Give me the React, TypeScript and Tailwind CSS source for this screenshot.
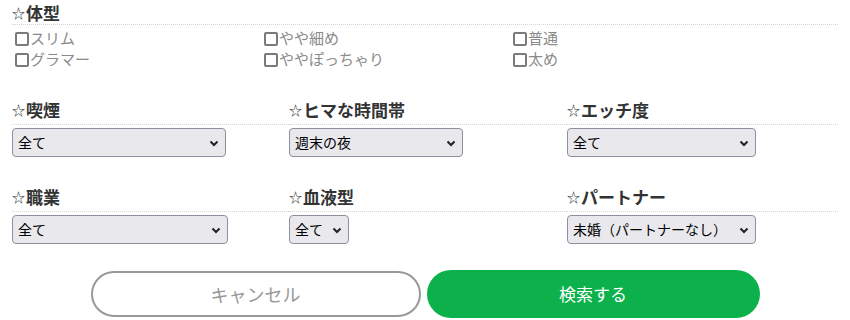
import React from 'react';

const font = { fontFamily: '"Noto Sans CJK JP", "Noto Sans", sans-serif' };

const Header = ({ label, pb = 'pb-[3px]' }: { label: string; pb?: string }) => (
  <div className={`border-b border-dotted border-[#d6d6d6] ${pb}`}>
    <div className="flex items-center h-[22px] text-[17px] font-bold text-[#333]">
      <span className="font-normal text-[13px] mr-[1px]">☆</span>
      <span>{label}</span>
    </div>
  </div>
);

const Check = ({ label }: { label: string }) => (
  <label className="flex items-center h-[21px] text-[15px] text-[#8a8a8a] pl-[3px]">
    <span className="w-[14px] h-[14px] border-2 border-[#7a7a7a] rounded-[2px] mr-[1px] bg-white shrink-0" />
    {label}
  </label>
);

const Select = ({ value, options, width }: { value: string; options: string[]; width: string }) => (
  <div className={`relative mt-[3px] ${width}`}>
    <select
      defaultValue={value}
      className="appearance-none w-full h-[29px] bg-[#e9e9ed] border border-[#8f8f9d] rounded-[4px] pl-[5px] pr-[24px] text-[14px] text-black"
      style={font}
    >
      {options.map((o) => (
        <option key={o}>{o}</option>
      ))}
    </select>
    <svg className="absolute right-[7px] top-[12px] pointer-events-none" width="10" height="7" viewBox="0 0 10 7">
      <path d="M1.5 1.5 L5 5 L8.5 1.5" fill="none" stroke="#222" strokeWidth="2" />
    </svg>
  </div>
);

const Field = ({ label, value, width }: { label: string; value: string; width: string }) => (
  <div>
    <Header label={label} />
    <Select value={value} options={[value]} width={width} />
  </div>
);

export default function App() {
  return (
    <div className="w-[850px] h-[320px] bg-white overflow-hidden px-3" style={font}>
      <div className="pt-[2px]">
        <Header label="体型" pb="pb-0" />
        <div className="grid grid-cols-[249px_249px_1fr] mt-[3px]">
          <Check label="スリム" />
          <Check label="やや細め" />
          <Check label="普通" />
          <Check label="グラマー" />
          <Check label="ややぽっちゃり" />
          <Check label="太め" />
        </div>
      </div>

      <div className="grid grid-cols-[277px_278px_1fr] mt-[29px]">
        <Field label="喫煙" value="全て" width="w-[214px]" />
        <Field label="ヒマな時間帯" value="週末の夜" width="w-[174px]" />
        <Field label="エッチ度" value="全て" width="w-[189px]" />
      </div>

      <div className="grid grid-cols-[277px_278px_1fr] mt-[29px]">
        <Field label="職業" value="全て" width="w-[216px]" />
        <Field label="血液型" value="全て" width="w-[60px]" />
        <Field label="パートナー" value="未婚（パートナーなし）" width="w-[189px]" />
      </div>

      <div className="flex justify-center items-center gap-[6px] mt-[26px]">
        <button className="w-[330px] h-[46px] rounded-full border-2 border-[#999] bg-white text-[18px] text-[#999]">
          キャンセル
        </button>
        <button className="w-[333px] h-[48px] rounded-full bg-[#0cb14b] text-[17px] text-white">
          検索する
        </button>
      </div>
    </div>
  );
}
